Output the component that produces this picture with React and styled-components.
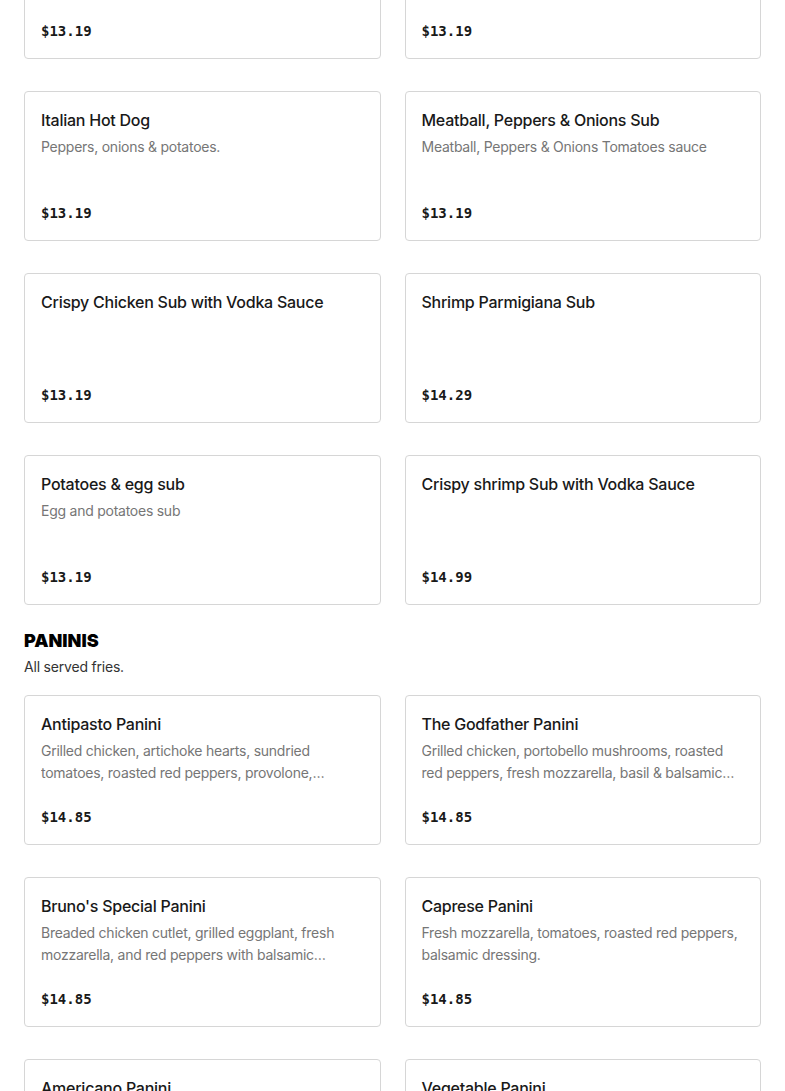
import React from "react"
import styled, { createGlobalStyle } from "styled-components"

const GlobalStyle = createGlobalStyle`
  body {
    margin: 0;
    background: #ffffff;
    font-family: Inter, "Liberation Sans", sans-serif;
    color: #191919;
  }
`

const Page = styled.div`
  padding: 0 24px;
  margin-top: -91px;
`

const Grid = styled.div`
  display: grid;
  grid-template-columns: 1fr 1fr;
  column-gap: 24px;
  row-gap: 32px;
  width: 737px;
`

const Card = styled.div`
  box-sizing: border-box;
  height: 150px;
  border: 1px solid #d6d6d6;
  border-radius: 4px;
  padding: 16px;
  display: flex;
  flex-direction: column;
`

const Title = styled.div`
  font-size: 16px;
  line-height: 24px;
  font-weight: 500;
  letter-spacing: -0.25px;
  color: #191919;
`

const Desc = styled.div`
  margin-top: 4px;
  font-size: 14px;
  line-height: 22px;
  letter-spacing: -0.25px;
  color: #767676;
  display: -webkit-box;
  -webkit-line-clamp: 2;
  -webkit-box-orient: vertical;
  overflow: hidden;
`

const Price = styled.div`
  margin-top: auto;
  font-family: "DejaVu Sans Mono", "Liberation Mono", monospace;
  font-weight: bold;
  font-size: 14px;
  line-height: 22px;
  color: #191919;
`

const Section = styled.div`
  padding-top: 24px;
`

const SectionTitle = styled.h2`
  margin: 0;
  font-size: 18px;
  line-height: 24px;
  font-weight: 900;
  color: #000;
`

const SectionSub = styled.div`
  margin-top: 3px;
  margin-bottom: 17px;
  font-size: 14px;
  line-height: 22px;
  letter-spacing: -0.2px;
  color: #333;
`

const subs = [
  { title: "", desc: "", price: "$13.19" },
  { title: "", desc: "", price: "$13.19" },
  { title: "Italian Hot Dog", desc: "Peppers, onions & potatoes.", price: "$13.19" },
  { title: "Meatball, Peppers & Onions Sub", desc: "Meatball, Peppers & Onions Tomatoes sauce", price: "$13.19" },
  { title: "Crispy Chicken Sub with Vodka Sauce", desc: "", price: "$13.19" },
  { title: "Shrimp Parmigiana Sub", desc: "", price: "$14.29" },
  { title: "Potatoes & egg sub", desc: "Egg and potatoes sub", price: "$13.19" },
  { title: "Crispy shrimp Sub with Vodka Sauce", desc: "", price: "$14.99" },
]

const paninis = [
  { title: "Antipasto Panini", desc: "Grilled chicken, artichoke hearts, sundried tomatoes, roasted red peppers, provolone, balsamic dressing.", price: "$14.85" },
  { title: "The Godfather Panini", desc: "Grilled chicken, portobello mushrooms, roasted red peppers, fresh mozzarella, basil & balsamic dressing.", price: "$14.85" },
  { title: "Bruno's Special Panini", desc: "Breaded chicken cutlet, grilled eggplant, fresh mozzarella, and red peppers with balsamic dressing.", price: "$14.85" },
  { title: "Caprese Panini", desc: "Fresh mozzarella, tomatoes, roasted red peppers, balsamic dressing.", price: "$14.85" },
  { title: "Americano Panini", desc: "Grilled chicken, bacon, american cheese, lettuce & tomato.", price: "$14.85" },
  { title: "Vegetable Panini", desc: "Grilled vegetables, fresh mozzarella, balsamic dressing.", price: "$14.85" },
]

const ItemCard = ({ title, desc, price }) => (
  <Card>
    {title ? <Title>{title}</Title> : null}
    {desc ? <Desc>{desc}</Desc> : null}
    <Price>{price}</Price>
  </Card>
)

const App = () => {
  return (
    <>
      <GlobalStyle />
      <Page>
        <Grid>
          {subs.map((item, i) => (
            <ItemCard key={i} {...item} />
          ))}
        </Grid>
        <Section>
          <SectionTitle>PANINIS</SectionTitle>
          <SectionSub>All served fries.</SectionSub>
          <Grid>
            {paninis.map((item, i) => (
              <ItemCard key={i} {...item} />
            ))}
          </Grid>
        </Section>
      </Page>
    </>
  )
}

export default App
